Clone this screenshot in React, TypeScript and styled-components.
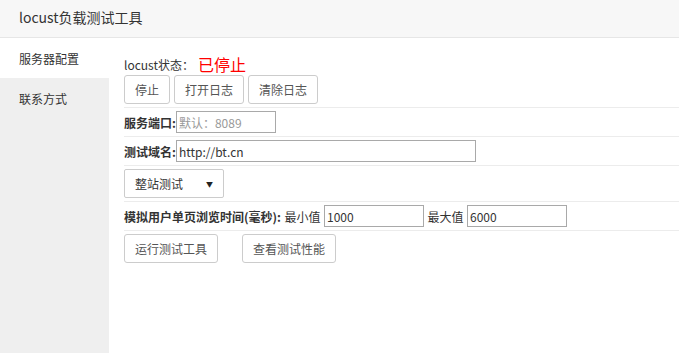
import React from 'react';
import styled, { createGlobalStyle } from 'styled-components';

const GlobalStyle = createGlobalStyle`
  html, body {
    margin: 0;
    padding: 0;
    height: 100%;
    background: #fff;
  }
  #root {
    height: 100%;
  }
  * {
    box-sizing: border-box;
  }
`;

const font = `"Noto Sans CJK SC", "Noto Sans", sans-serif`;

const menu = [
  { name: '服务器配置', active: true },
  { name: '联系方式', active: false },
];

export default function App() {
  return (
    <>
      <GlobalStyle />
      <Page>
        <Header>locust负载测试工具</Header>
        <Body>
          <Sidebar>
            {menu.map(({ name, active }) => (
              <MenuItem key={name} active={active}>{name}</MenuItem>
            ))}
          </Sidebar>
          <Content>
            <Status>
              locust状态：<StatusValue>已停止</StatusValue>
            </Status>
            <Row first>
              <ButtonGroup>
                <Button>停止</Button>
                <Button>打开日志</Button>
                <Button>清除日志</Button>
              </ButtonGroup>
            </Row>
            <Row>
              <Label>服务端口:</Label>
              <Input width={100} placeholder="默认：8089" />
            </Row>
            <Row>
              <Label>测试域名:</Label>
              <Input width={300} defaultValue="http://bt.cn" />
            </Row>
            <Row>
              <Select>
                <span>整站测试</span>
                <Arrow>▼</Arrow>
              </Select>
            </Row>
            <Row>
              <Label>模拟用户单页浏览时间(毫秒):</Label>
              <Text>最小值</Text>
              <Input width={100} defaultValue="1000" />
              <Text>最大值</Text>
              <Input width={100} defaultValue="6000" />
            </Row>
            <Row last>
              <ButtonGroup gap={24}>
                <Button>运行测试工具</Button>
                <Button>查看测试性能</Button>
              </ButtonGroup>
            </Row>
          </Content>
        </Body>
      </Page>
    </>
  );
}

const Page = styled.div`
  display: flex;
  flex-direction: column;
  height: 100%;
  font-family: ${font};
  color: #333;
`;

const Header = styled.div`
  flex-shrink: 0;
  height: 38px;
  padding: 0 19px 3px;
  display: flex;
  align-items: center;
  background: #f7f7f7;
  border-bottom: 1px solid #e6e6e6;
  font-size: 14px;
  color: #333;
`;

const Body = styled.div`
  flex: 1;
  display: flex;
  min-height: 0;
`;

const Sidebar = styled.div`
  width: 109px;
  flex-shrink: 0;
  background: #efefef;
`;

const MenuItem = styled.div<{ active?: boolean }>`
  height: 40px;
  padding-left: 19px;
  display: flex;
  align-items: center;
  font-size: 12px;
  color: #333;
  background: ${({ active }) => (active ? '#fff' : 'transparent')};
`;

const Content = styled.div`
  flex: 1;
  padding: 15px 0 0 15px;
`;

const Status = styled.div`
  height: 22px;
  display: flex;
  align-items: center;
  font-size: 12px;
  color: #333;
`;

const StatusValue = styled.span`
  font-size: 16px;
  color: #f00;
  margin-left: 4px;
`;

const Row = styled.div<{ first?: boolean; last?: boolean }>`
  display: flex;
  align-items: center;
  padding: ${({ first }) => (first ? '0 0 3px' : '3px 0')};
  border-bottom: ${({ last }) => (last ? 'none' : '1px solid #ececec')};
  font-size: 12px;
`;

const ButtonGroup = styled.div<{ gap?: number }>`
  display: flex;
  gap: ${({ gap }) => gap ?? 4}px;
`;

const Button = styled.button`
  height: 29px;
  padding: 0 10px;
  border: 1px solid #ccc;
  border-radius: 3px;
  background: #fff;
  font-family: ${font};
  font-size: 12px;
  color: #555;
  cursor: pointer;
`;

const Label = styled.span`
  font-weight: bold;
  color: #333;
`;

const Text = styled.span`
  padding: 0 3.5px;
  color: #333;
`;

const Input = styled.input<{ width: number }>`
  width: ${({ width }) => width}px;
  height: 22px;
  padding: 0 2px;
  border: 1px solid #a9a9a9;
  border-radius: 0;
  font-family: ${font};
  font-size: 12px;
  color: #333;
  outline: none;
  &::placeholder {
    color: #999;
  }
`;

const Select = styled.div`
  width: 100px;
  height: 29px;
  padding: 0 10px;
  display: flex;
  align-items: center;
  justify-content: space-between;
  border: 1px solid #ccc;
  border-radius: 2px;
  background: #fff;
  font-size: 12px;
  color: #333;
`;

const Arrow = styled.span`
  font-size: 7px;
  color: #222;
`;
